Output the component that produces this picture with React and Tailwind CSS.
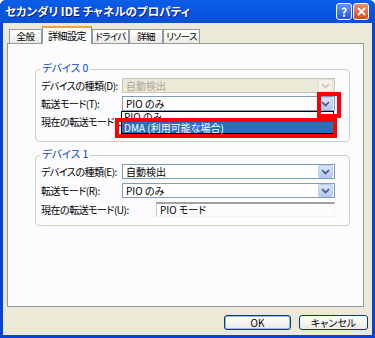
import React from "react";

const FONT = {
  fontFamily: '"Noto Sans CJK JP", "Liberation Sans", sans-serif',
};

const TABS = [
  { label: "全般", w: "w-[33px]" },
  { label: "詳細設定", w: "w-[50px]", active: true },
  { label: "ドライバ", w: "w-[37px]" },
  { label: "詳細", w: "w-[34px]" },
  { label: "リソース", w: "w-[37px]" },
];

function Chevron({ color = "#4d6185" }) {
  return (
    <svg width="9" height="6" viewBox="0 0 9 6">
      <path d="M1 1.2 L4.5 4.5 L8 1.2" fill="none" stroke={color} strokeWidth="1.8" />
    </svg>
  );
}

function Combo({ value, disabled }) {
  return (
    <div
      className={
        "flex h-[15px] w-[213px] items-center border " +
        (disabled ? "border-[#c9c7ba] bg-[#ece9d8]" : "border-[#7f9db9] bg-white")
      }
    >
      <span
        className={
          "flex-1 whitespace-nowrap pl-[3px] text-[10px] leading-none " +
          (disabled ? "text-[#aca899]" : "text-black")
        }
      >
        {value}
      </span>
      <div
        className={
          "mr-px grid h-[13px] w-[15px] place-items-center rounded-[2px] border " +
          (disabled
            ? "border-[#e3e1d6] bg-[#f2f1ea]"
            : "border-[#b9cbf3] bg-gradient-to-b from-[#dbe5fc] to-[#b4c8f5]")
        }
      >
        <Chevron color={disabled ? "#c9c7ba" : "#4d6185"} />
      </div>
    </div>
  );
}

function Row({ label, children }) {
  return (
    <div className="flex h-[15px] items-center">
      <span className="w-[81px] shrink-0 whitespace-nowrap text-[10px] leading-none tracking-[-0.5px] text-black">
        {label}
      </span>
      {children}
    </div>
  );
}

function Group({ title, children, className = "" }) {
  return (
    <div
      className={
        "relative ml-[27px] w-[315px] rounded-[4px] border border-[#d0d0bf] " + className
      }
    >
      <span className="absolute -top-[7px] left-[4px] whitespace-nowrap bg-[#fcfcfe] px-[2px] text-[10.5px] leading-none text-[#0046d5]">
        {title}
      </span>
      {children}
    </div>
  );
}

function Button({ children, isDefault }) {
  return (
    <div
      className={
        "grid h-[15px] place-items-center rounded-[3px] border border-[#003c74] bg-gradient-to-b from-white to-[#ecebe6] text-[10px] leading-none text-black " +
        (isDefault ? "w-[67px] shadow-[inset_0_0_0_1px_#9db9eb]" : "w-[69px]")
      }
    >
      {children}
    </div>
  );
}

export default function App() {
  return (
    <div
      className="relative flex h-[338px] w-[375px] flex-col overflow-hidden rounded-t-[6px] bg-[#0842d6] [font-feature-settings:'palt']"
      style={FONT}
    >
      {/* title bar */}
      <div className="flex h-[23px] shrink-0 items-center bg-gradient-to-b from-[#0a5ee8] via-[#0854e0] to-[#0a4fd4] pl-[5px] pr-[5px]">
        <span className="flex-1 whitespace-nowrap text-[11.5px] font-bold leading-none text-white [text-shadow:1px_1px_0_#0a1f7a]">
          セカンダリ IDE チャネルのプロパティ
        </span>
        <div className="mr-px grid h-[17px] w-[16px] place-items-center rounded-[3px] border border-white bg-gradient-to-b from-[#5f95f8] to-[#2457d6] text-[12px] font-bold leading-none text-white">
          ?
        </div>
        <div className="mr-[1px] grid h-[17px] w-[16px] place-items-center rounded-[3px] border border-white bg-gradient-to-b from-[#f08c6a] to-[#d8441d]">
          <svg width="9" height="9" viewBox="0 0 9 9">
            <path d="M1 1 L8 8 M8 1 L1 8" stroke="white" strokeWidth="1.8" />
          </svg>
        </div>
      </div>

      {/* body */}
      <div className="mx-[3px] mb-[3px] flex flex-1 flex-col bg-[#ece9d8] pl-[4px]">
        {/* tabs */}
        <div className="mt-[4px] flex h-[16px] items-end pl-[2px]">
          {TABS.map((t) =>
            t.active ? (
              <div
                key={t.label}
                className={
                  t.w +
                  " relative z-10 -mb-px flex h-[18px] items-center justify-center overflow-visible whitespace-nowrap border-x border-t-[2px] border-x-[#919b9c] border-t-[#f1a539] bg-[#fcfcfe] text-[10px] leading-none tracking-[-0.5px] text-black"
                }
              >
                {t.label}
              </div>
            ) : (
              <div
                key={t.label}
                className={
                  t.w +
                  " flex h-[14px] items-center justify-center whitespace-nowrap border-x border-t border-[#919b9c] bg-gradient-to-b from-white to-[#ecebe6] text-[9.5px] leading-none tracking-[-0.6px] text-black"
                }
              >
                {t.label}
              </div>
            )
          )}
        </div>

        {/* panel */}
        <div className="h-[264px] w-[357px] border border-[#919b9c] bg-[#fcfcfe] pt-[25px]">
          <Group title="デバイス 0" className="h-[73px]">
            <div className="flex flex-col gap-[3px] pl-[5px] pt-[8px]">
              <Row label="デバイスの種類(D):">
                <Combo value="自動検出" disabled />
              </Row>
              <Row label="転送モード(T):">
                <Combo value="PIO のみ" />
              </Row>
              <Row label="現在の転送モード(U):">
                <span />
              </Row>
            </div>
          </Group>

          <Group title="デバイス 1" className="mt-[13px] h-[71px]">
            <div className="flex flex-col gap-[4px] pl-[5px] pt-[8px]">
              <Row label="デバイスの種類(E):">
                <Combo value="自動検出" />
              </Row>
              <Row label="転送モード(R):">
                <Combo value="PIO のみ" />
              </Row>
              <div className="flex h-[15px] items-center">
                <span className="w-[115px] shrink-0 whitespace-nowrap text-[10px] leading-none tracking-[-0.5px] text-black">
                  現在の転送モード(U):
                </span>
                <div className="flex h-[15px] w-[179px] items-center border-t-[2px] border-l border-b border-r border-t-[#a5a397] border-l-[#c9c7ba] border-b-[#f4f3ee] border-r-[#f4f3ee] pl-[3px] text-[10px] leading-none text-black">
                  PIO モード
                </div>
              </div>
            </div>
          </Group>
        </div>

        {/* buttons */}
        <div className="mt-[8px] flex justify-end gap-[8px] pr-[4px]">
          <Button isDefault>OK</Button>
          <Button>キャンセル</Button>
        </div>
      </div>

      {/* open dropdown list */}
      <div className="absolute left-[121px] top-[111px] h-[23px] w-[213px] border border-black bg-white">
        <div className="flex h-[10px] items-end overflow-hidden pl-[2px] text-[10px] leading-none text-black">
          PIO のみ
        </div>
        <div className="flex h-[11px] items-center whitespace-nowrap bg-[#316ac5] pl-[2px] text-[10px] leading-none text-white">
          DMA (利用可能な場合)
        </div>
      </div>

      {/* red highlight boxes */}
      <div className="absolute left-[317px] top-[92px] h-[26px] w-[24px] border-[4px] border-[#ff0000]" />
      <div className="absolute left-[115px] top-[118px] h-[20px] w-[222px] border-[4px] border-[#ff0000]" />
    </div>
  );
}
